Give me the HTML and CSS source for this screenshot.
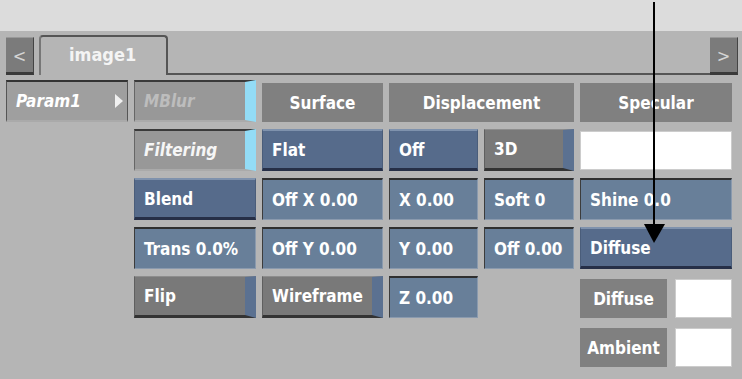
FILE: index.html
```html
<!DOCTYPE html>
<html lang="en">
<head>
  <meta charset="UTF-8" />
  <title>Material Editor</title>
  <link rel="stylesheet" href="styles.css">
</head>
<body>

  <div class="top-band"></div>

  <main class="panel">

    <div class="tab-row">
      <button class="arrow-btn">&lt;</button>
      <div class="tab">image1</div>
      <div class="tab-rest">
        <button class="arrow-btn">&gt;</button>
      </div>
    </div>

    <div class="editor">
      <!-- row 1 -->
      <div class="cell param">Param1 <span class="tri"></span></div>
      <div class="cell mblur">MBlur</div>
      <div class="cell head">Surface</div>
      <div class="cell head span2">Displacement</div>
      <div class="cell head">Specular</div>

      <!-- row 2 -->
      <div class="cell mblur filtering c2">Filtering</div>
      <div class="cell sel">Flat</div>
      <div class="cell sel">Off</div>
      <div class="cell toggle">3D</div>
      <div class="cell swatch"></div>

      <!-- row 3 -->
      <div class="cell sel c2">Blend</div>
      <div class="cell field">Off X 0.00</div>
      <div class="cell field">X 0.00</div>
      <div class="cell field">Soft 0</div>
      <div class="cell field">Shine 0.0</div>

      <!-- row 4 -->
      <div class="cell field c2">Trans 0.0%</div>
      <div class="cell field">Off Y 0.00</div>
      <div class="cell field">Y 0.00</div>
      <div class="cell field">Off 0.00</div>
      <div class="cell sel">Diffuse</div>

      <!-- row 5 -->
      <div class="cell toggle c2">Flip</div>
      <div class="cell toggle">Wireframe</div>
      <div class="cell field">Z 0.00</div>
      <div class="colors">
        <div class="color-row">
          <div class="label">Diffuse</div>
          <div class="chip"></div>
        </div>
        <div class="color-row">
          <div class="label">Ambient</div>
          <div class="chip"></div>
        </div>
      </div>
    </div>

  </main>

  <svg class="pointer" width="742" height="379" viewBox="0 0 742 379">
    <line x1="654" y1="2" x2="654" y2="228" stroke="#000" stroke-width="2" />
    <polygon points="644,224 665,224 654,243" fill="#000" />
  </svg>

</body>
</html>
```

FILE: styles.css
```css
body {
  margin: 0;
  padding: 0;
  width: 742px;
  height: 379px;
  overflow: hidden;
  background: #b5b5b5;
  font-family: "DejaVu Sans Condensed", "DejaVu Sans", sans-serif;
  font-weight: bold;
  font-size: 17px;
  color: white;
}

.top-band {
  height: 31px;
  background: #dcdcdc;
}

.panel {
  background: #b5b5b5;
  height: 348px;
}

/* Tabs */
.tab-row {
  display: flex;
  align-items: flex-end;
  padding: 0 0 0 6px;
  height: 44px;
  box-sizing: border-box;
}

.arrow-btn {
  width: 28px;
  height: 38px;
  box-sizing: border-box;
  background: #7b7b7b;
  border: none;
  border-top: 1px solid #999;
  border-bottom: 3px solid #3a3a3a;
  border-right: 1px solid #444;
  color: #d4d4d4;
  font-family: inherit;
  font-weight: normal;
  font-size: 18px;
  padding: 0;
}

.tab {
  margin-left: 5px;
  width: 129px;
  height: 40px;
  box-sizing: border-box;
  border: 2px solid #555;
  border-bottom: none;
  border-left-color: #777;
  border-radius: 4px 4px 0 0;
  padding: 7px 0 0 28px;
  font-size: 18px;
  color: #f4f4f4;
}

.tab-rest {
  flex: 1;
  display: flex;
  justify-content: flex-end;
  border-bottom: 2px solid #555;
  height: 40px;
  box-sizing: border-box;
  margin-right: 4px;
  align-items: flex-end;
}

.tab-rest .arrow-btn {
  margin-bottom: -2px;
}

/* Editor grid */
.editor {
  display: grid;
  grid-template-columns: 122px 122px 121px 89px 90px 152px;
  grid-template-rows: repeat(6, 42px);
  column-gap: 6px;
  row-gap: 7px;
  padding: 5px 0 0 6px;
}

.cell {
  box-sizing: border-box;
  display: flex;
  align-items: center;
  padding: 0 9px;
  white-space: nowrap;
  overflow: hidden;
}

.c2 {
  grid-column: 2;
}

.span2 {
  grid-column: span 2;
}

.param {
  background: #9f9f9f;
  border-top: 2px solid #333;
  border-left: 1px solid #555;
  border-right: 1px solid #555;
  border-bottom: 2px solid #aaa;
  font-style: italic;
  justify-content: space-between;
  padding-right: 4px;
}

.tri {
  width: 0;
  height: 0;
  border-top: 7px solid transparent;
  border-bottom: 7px solid transparent;
  border-left: 8px solid #f0f0f0;
}

.mblur {
  background: #989898;
  border-top: 2px solid #3a3a3a;
  border-left: 1px solid #666;
  border-right: 11px solid #93dcf6;
  border-bottom: 2px solid #aaa;
  color: #bdbdbd;
  font-style: italic;
}

.filtering {
  color: #f6f6f6;
}

.head {
  background: #808080;
  justify-content: center;
  margin-top: 3px;
  height: 39px;
}

.sel {
  background: #566b8b;
  border-top: 2px solid #7f92ad;
  border-left: 1px solid #4a5d7a;
  border-right: 1px solid #4a5d7a;
  border-bottom: 3px solid #262f47;
}

.field {
  background: #687f99;
  border-top: 2px solid #2f2f2f;
  border-left: 1px solid #3c3c3c;
  border-right: 1px solid #8a9aae;
  border-bottom: 1px solid #8a9aae;
}

.toggle {
  background: #797979;
  border-top: 1px solid #8d8d8d;
  border-left: 1px solid #5f5f5f;
  border-right: 11px solid #5b7191;
  border-bottom: 3px solid #333;
}

.swatch {
  background: #fff;
  border: 1px solid #ccc;
  margin: 2px 0 1px;
}

.colors {
  grid-column: 6;
  grid-row: 5 / span 2;
  display: flex;
  flex-direction: column;
  gap: 10px;
  padding-top: 3px;
}

.color-row {
  display: flex;
  gap: 8px;
  height: 39px;
}

.label {
  width: 87px;
  background: #808080;
  display: flex;
  align-items: center;
  justify-content: center;
}

.chip {
  flex: 1;
  background: #fff;
  border: 1px solid #ccc;
}

.pointer {
  position: absolute;
  top: 0;
  left: 0;
  pointer-events: none;
}
```
